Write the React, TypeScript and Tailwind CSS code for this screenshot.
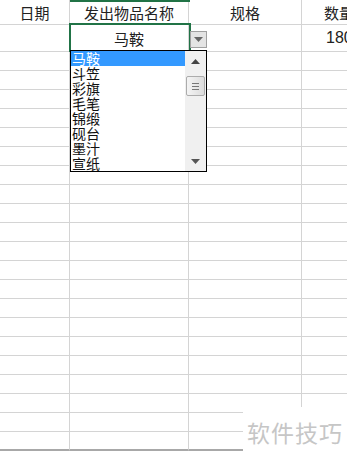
const items = ['马鞍', '斗笠', '彩旗', '毛笔', '锦缎', '砚台', '墨汁', '宣纸'];
const cols = 'grid grid-cols-[70px_119px_113px_100px] grid-rows-[100%]';
const cell = 'border-r border-b border-[#d4d4d4] overflow-hidden whitespace-nowrap leading-none';

function Row({ h, cells, last }: { h: string; cells: React.ReactNode[]; last?: boolean }) {
    return (
        <div className={`${cols} ${h}`}>
            {cells.map((c, i) => (
                <div key={i} className={`${cell} ${last ? 'border-b-2 border-b-[#a8a8a8]' : ''} flex items-center justify-center`}>
                    {c}
                </div>
            ))}
        </div>
    );
}

function Triangle({ color = '#555', up }: { color?: string; up?: boolean }) {
    return (
        <svg width="9" height="5" viewBox="0 0 9 5">
            <path d={up ? 'M0 5 L9 5 L4.5 0 Z' : 'M0 0 L9 0 L4.5 5 Z'} fill={color} />
        </svg>
    );
}

export default function App() {
    const blanks = Array.from({ length: 21 });
    return (
        <div
            className="relative w-[347px] h-[457px] overflow-hidden bg-white text-[15px] text-[#222]"
            style={{ fontFamily: '"Noto Sans CJK SC", "Liberation Sans", sans-serif' }}
        >
            <Row h="h-[25px]" cells={['日期', '发出物品名称', '规格', <span className="w-full pl-[22px]">数量</span>]} />
            <Row
                h="h-[27px]"
                cells={['', '马鞍', '', <span className="w-full pl-[24px] font-['Liberation_Sans'] text-[16px]">180</span>]}
            />
            {blanks.map((_, i) => (
                <Row key={i} h="h-[19px]" cells={['', '', '', '']} last={i === blanks.length - 1} />
            ))}

            {/* top green accent over header B */}
            <div className="absolute left-[70px] top-0 w-[120px] h-[2px] bg-[#217346]" />

            {/* active cell */}
            <div className="absolute left-[69px] top-[23px] w-[122px] h-[29px] border-2 border-[#217346]" />

            {/* dropdown button */}
            <div className="absolute left-[190px] top-[31px] w-[17px] h-[17px] border border-[#a0a0a0] bg-[#e4e4e4] flex items-center justify-center">
                <Triangle color="#666" />
            </div>

            {/* list */}
            <div className="absolute left-[70px] top-[50px] w-[137px] h-[122px] border border-black bg-white flex text-[14px] leading-[15px]">
                <div className="flex-1 flex flex-col">
                    {items.map((it, i) => (
                        <div
                            key={it}
                            className={`h-[15px] pl-[1px] whitespace-nowrap ${i === 0 ? 'bg-[#3399ff] text-white' : 'text-[#111]'}`}
                        >
                            {it}
                        </div>
                    ))}
                </div>
                <div className="w-[21px] bg-[#f0f0f0] flex flex-col items-center">
                    <div className="h-[20px] flex items-center justify-center">
                        <Triangle color="#444" up />
                    </div>
                    <div className="mt-[5px] w-[19px] h-[20px] border border-[#acacac] rounded-[2px] bg-gradient-to-r from-[#f4f4f4] to-[#dcdcdc] flex flex-col items-center justify-center gap-[2px]">
                        <div className="w-[7px] h-px bg-[#777]" />
                        <div className="w-[7px] h-px bg-[#777]" />
                        <div className="w-[7px] h-px bg-[#777]" />
                    </div>
                    <div className="flex-1" />
                    <div className="h-[20px] flex items-center justify-center">
                        <Triangle color="#555" />
                    </div>
                </div>
            </div>

            {/* watermark */}
            <div className="absolute left-[243px] top-[407px] right-0 bottom-0 bg-white flex items-center pl-[4px]">
                <span className="text-[23px] text-[#c6c6c6] tracking-[1px] whitespace-nowrap">软件技巧</span>
            </div>
        </div>
    );
}
